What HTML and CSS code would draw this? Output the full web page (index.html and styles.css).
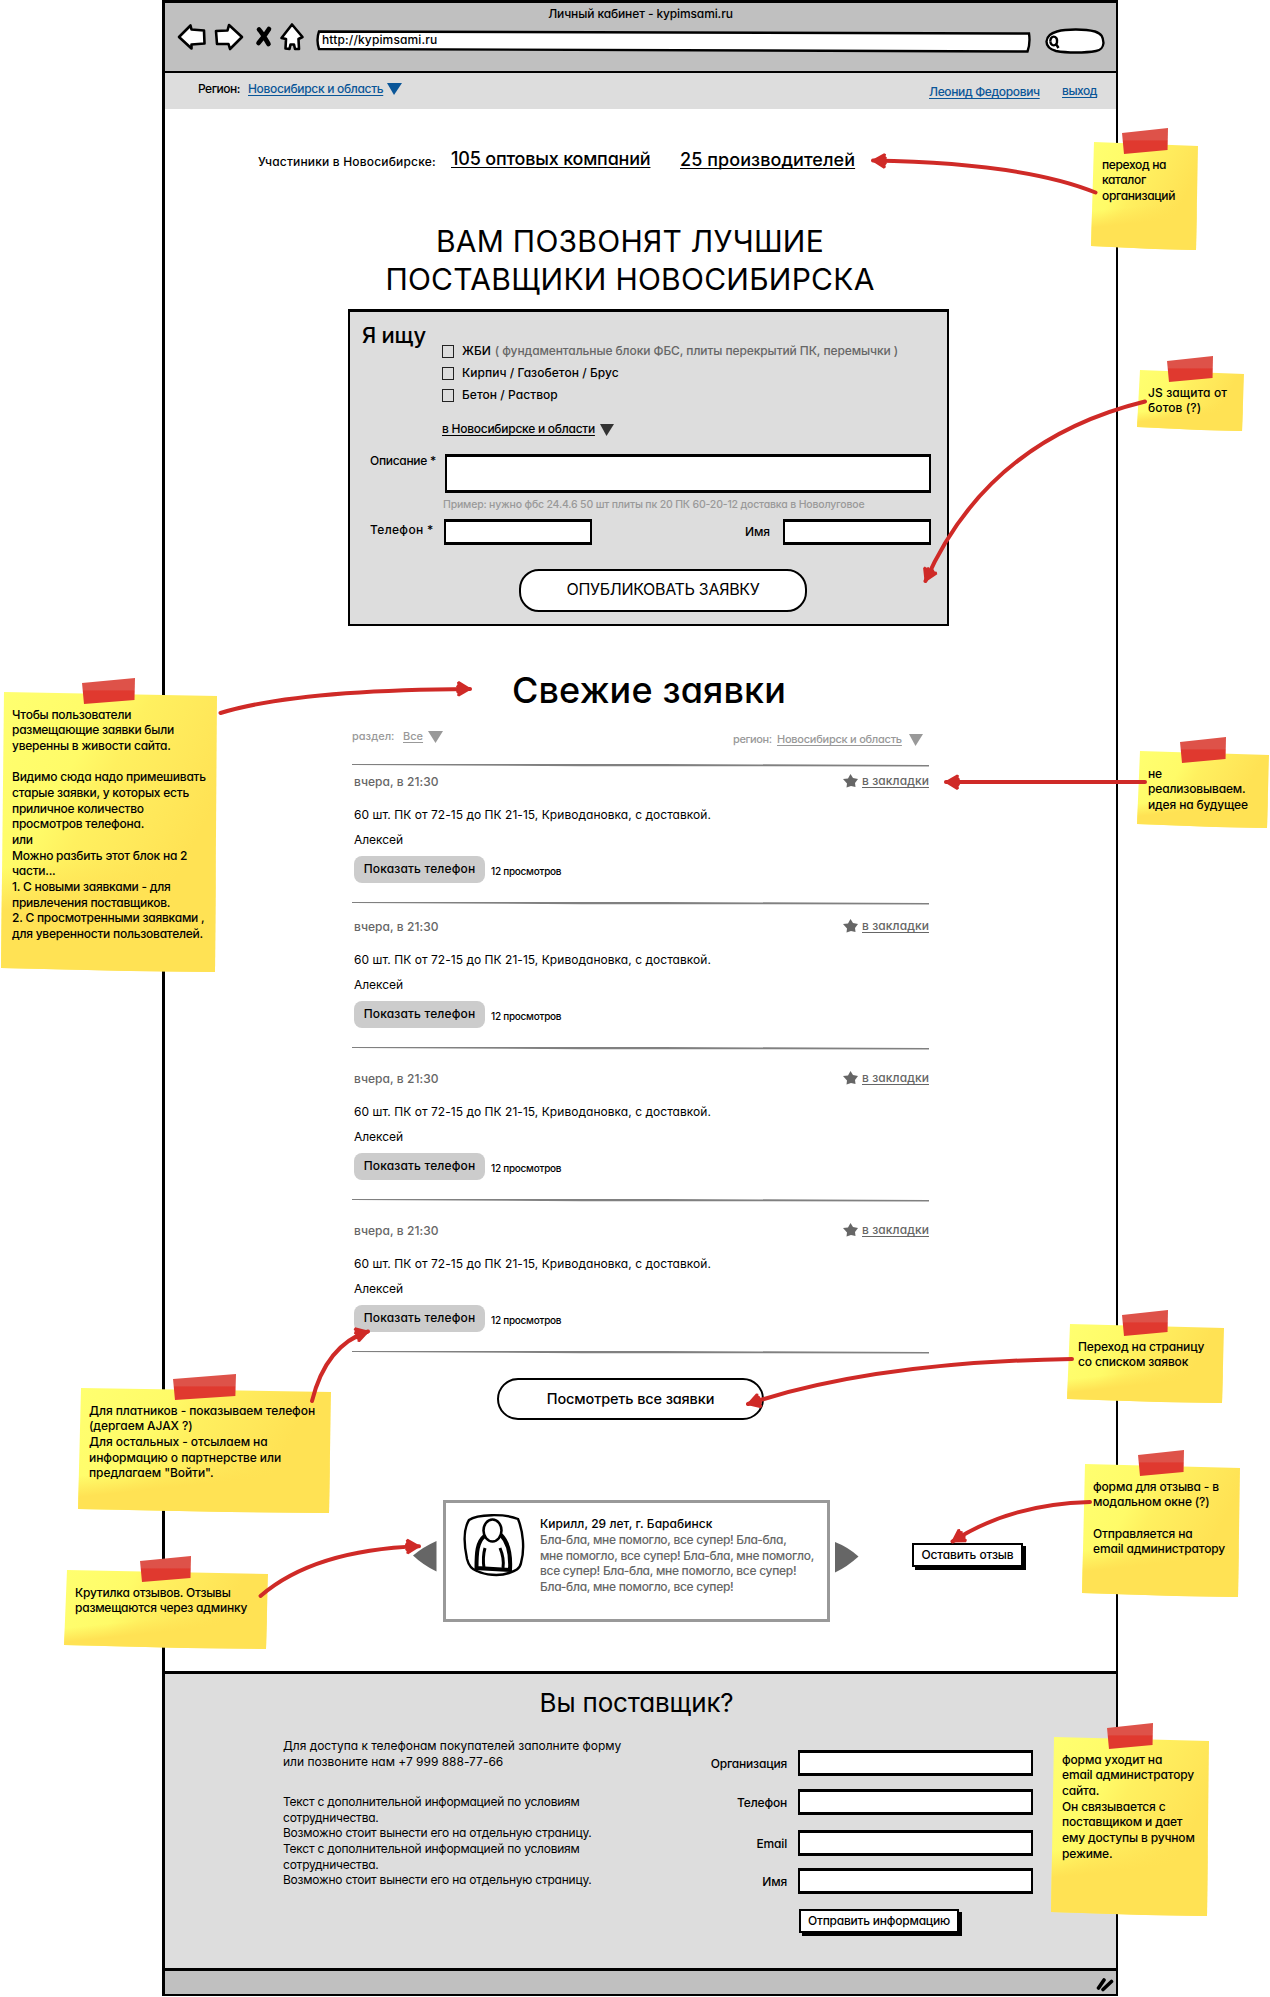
FILE: index.html
```html
<!DOCTYPE html>
<html lang="ru">
<head>
<meta charset="utf-8">
<title>Личный кабинет - kypimsami.ru</title>
<link rel="stylesheet" href="styles.css">
</head>
<body>
<div class="window">
  <header class="toolbar">
    <div class="window-title">Личный кабинет - kypimsami.ru</div>
    <div class="nav">
      <svg class="nav-icons" width="130" height="32" viewBox="0 0 130 32">
        <g fill="#fff" stroke="#000" stroke-width="2.6" stroke-linejoin="round">
          <path d="M2 15 13.500 3.500 14.500 7.500 27 8.500 27.500 21.500 14.500 22.500 14.500 26.500Z"/>
          <path d="M39 9 50.500 8.500 52 3 65 15 53 27 51.500 22 40 22Z"/>
          <path d="M115 2.500 125.500 15 121.500 17 122 27 118 27 117 22.500 113.500 22.500 112.500 27 108.500 26.500 109 17 104.500 16Z"/>
        </g>
        <path d="M82 7.500C86 12 89 18 91.500 22M92 7C89 12 85 17 81.500 21" fill="none" stroke="#000" stroke-width="4.600" stroke-linecap="round"/>
      </svg>
      <div class="url">
        <svg width="715" height="24" viewBox="0 0 715 24"><path d="M3 1.500 713 3.500Q714.500 13 711.500 21.500L3 19Q0 10 3 1.500Z" fill="#fff" stroke="#000" stroke-width="2.400"/></svg>
        <span>http://kypimsami.ru</span>
      </div>
      <svg class="search" width="60" height="26" viewBox="0 0 60 26">
        <path d="M12 3.500C22 .8 40 1 50 3.500 57 6 58 9 58.500 15 58 20 56 22 51 23 40 25 22 25 11 23 4 21 1.500 17 1.500 13.500 2 8 6 5 12 3.500Z" fill="#fff" stroke="#000" stroke-width="2.400"/>
        <path d="M11 16 13.500 20M5.500 13A3.300 3.700 0 1 0 12 13 3.300 3.700 0 1 0 5.500 13" fill="none" stroke="#000" stroke-width="2.400"/>
      </svg>
    </div>
  </header>

  <div class="account-bar">
    <span class="region-label">Регион:</span>
    <a class="region-link">Новосибирск и область</a>
    <svg class="tri" width="15" height="12" viewBox="0 0 15 12"><path d="M0 0H15L7 12Z" fill="#0a5698"/></svg>
    <a class="user-link">Леонид Федорович</a>
    <a class="exit-link">выход</a>
  </div>

  <main>
    <div class="stats">
      <span class="stats-label">Участиники в Новосибирске:</span>
      <a class="stats-a">105 оптовых компаний</a>
      <a class="stats-b">25 производителей</a>
    </div>
    <h1>ВАМ ПОЗВОНЯТ ЛУЧШИЕ<br>ПОСТАВЩИКИ НОВОСИБИРСКА</h1>

    <form class="order">
      <div class="order-top">
        <div class="order-title">Я ищу</div>
        <div class="choices">
          <label><i class="box"></i><span>ЖБИ</span><em>( фундаментальные блоки ФБС, плиты перекрытий ПК, перемычки )</em></label>
          <label><i class="box"></i><span class="c2">Кирпич / Газобетон / Брус</span></label>
          <label><i class="box"></i><span class="c2">Бетон / Раствор</span></label>
          <div class="where"><a>в Новосибирске и области</a><svg width="14" height="12" viewBox="0 0 14 12"><path d="M0 0H14L6.500 12Z" fill="#333"/></svg></div>
        </div>
      </div>
      <div class="order-desc"><span class="l-desc">Описание *</span><div class="field f-desc"></div></div>
      <div class="hint">Пример: нужно фбс 24.4.6 50 шт плиты пк 20 ПК 60-20-12 доставка в Новолуговое</div>
      <div class="order-contact">
        <span class="l-phone">Телефон *</span><div class="field f-phone"></div>
        <span class="l-name">Имя</span><div class="field f-name"></div>
      </div>
      <div class="pill publish">ОПУБЛИКОВАТЬ ЗАЯВКУ</div>
    </form>

    <h2>Свежие заявки</h2>
    <div class="filters">
      <span class="f-l">раздел:</span><a class="f-all">Все</a><svg class="f-t1" width="15" height="12" viewBox="0 0 15 12"><path d="M0 0H15L7.500 12Z" fill="#999"/></svg>
      <span class="f-r">регион:</span><a class="f-reg">Новосибирск и область</a><svg class="f-t2" width="14" height="12" viewBox="0 0 14 12"><path d="M0 0H14L6.500 12Z" fill="#999"/></svg>
    </div>

    <div class="list">
      <article class="item first">
        <svg class="rule" width="577" height="3" viewBox="0 0 577 3"><path d="M0 0 310 0 577 1V2.500L230 2.200 0 1Z" fill="#808080"/></svg>
        <div class="item-head"><time>вчера, в 21:30</time><svg width="15" height="14" viewBox="0 0 15 14"><path d="M7.500 0 10 4 15 5 12 9 12.500 13 8 12 3.500 13.500 4 9.500 0 5 5 4.500Z" fill="#666"/></svg><a>в закладки</a></div>
        <p class="what">60 шт. ПК от 72-15 до ПК 21-15, Криводановка, с доставкой.</p>
        <p class="who">Алексей</p>
        <div class="item-foot"><span class="show">Показать телефон</span><span class="views">12 просмотров</span></div>
      </article>
      <article class="item second">
        <svg class="rule" width="577" height="3" viewBox="0 0 577 3"><path d="M0 0 310 0 577 1V2.500L230 2.200 0 1Z" fill="#808080"/></svg>
        <div class="item-head"><time>вчера, в 21:30</time><svg width="15" height="14" viewBox="0 0 15 14"><path d="M7.500 0 10 4 15 5 12 9 12.500 13 8 12 3.500 13.500 4 9.500 0 5 5 4.500Z" fill="#666"/></svg><a>в закладки</a></div>
        <p class="what">60 шт. ПК от 72-15 до ПК 21-15, Криводановка, с доставкой.</p>
        <p class="who">Алексей</p>
        <div class="item-foot"><span class="show">Показать телефон</span><span class="views">12 просмотров</span></div>
      </article>
      <article class="item">
        <svg class="rule" width="577" height="3" viewBox="0 0 577 3"><path d="M0 0 310 0 577 1V2.500L230 2.200 0 1Z" fill="#808080"/></svg>
        <div class="item-head"><time>вчера, в 21:30</time><svg width="15" height="14" viewBox="0 0 15 14"><path d="M7.500 0 10 4 15 5 12 9 12.500 13 8 12 3.500 13.500 4 9.500 0 5 5 4.500Z" fill="#666"/></svg><a>в закладки</a></div>
        <p class="what">60 шт. ПК от 72-15 до ПК 21-15, Криводановка, с доставкой.</p>
        <p class="who">Алексей</p>
        <div class="item-foot"><span class="show">Показать телефон</span><span class="views">12 просмотров</span></div>
      </article>
      <article class="item">
        <svg class="rule" width="577" height="3" viewBox="0 0 577 3"><path d="M0 0 310 0 577 1V2.500L230 2.200 0 1Z" fill="#808080"/></svg>
        <div class="item-head"><time>вчера, в 21:30</time><svg width="15" height="14" viewBox="0 0 15 14"><path d="M7.500 0 10 4 15 5 12 9 12.500 13 8 12 3.500 13.500 4 9.500 0 5 5 4.500Z" fill="#666"/></svg><a>в закладки</a></div>
        <p class="what">60 шт. ПК от 72-15 до ПК 21-15, Криводановка, с доставкой.</p>
        <p class="who">Алексей</p>
        <div class="item-foot"><span class="show">Показать телефон</span><span class="views">12 просмотров</span></div>
      </article>
      <svg class="rule" width="577" height="3" viewBox="0 0 577 3"><path d="M0 0 310 0 577 1V2.500L230 2.200 0 1Z" fill="#808080"/></svg>
    </div>
    <div class="pill all">Посмотреть все заявки</div>

    <section class="reviews">
      <svg class="prev" width="24" height="31" viewBox="0 0 24 31"><path d="M23.500 0V30.500Q10 24 0 14.500 10 6 23.500 0Z" fill="#666"/></svg>
      <div class="review">
        <svg width="62" height="65" viewBox="0 0 62 65" fill="none" stroke="#000">
          <path d="M6 7C14 1 42 .5 55 6 60 18 62 36 58 50 57 56 52 58 46 60 36 63.500 22 62 14 58 7 56 5 50 4 46 1 32 .5 16 6 7Z" stroke-width="2.400"/>
          <ellipse cx="29.500" cy="17.500" rx="9" ry="11" stroke-width="2.600"/>
          <path d="M21.500 23C14 29 13.500 40 13.500 55L47 57C48 40 45 29 38 22" stroke-width="4"/>
          <path d="M22 35C20 42 20 48 21 55M37 35C40 42 41 48 40 55" stroke-width="3"/>
        </svg>
        <div class="review-text"><b>Кирилл, 29 лет, г. Барабинск</b><br>Бла-бла, мне помогло, все супер! Бла-бла,<br>мне помогло, все супер! Бла-бла, мне помогло,<br>все супер! Бла-бла, мне помогло, все супер!<br>Бла-бла, мне помогло, все супер!</div>
      </div>
      <svg class="next" width="24" height="31" viewBox="0 0 24 31"><path d="M0 0Q13 5 23.500 14.500 12 25 0 30.500Z" fill="#666"/></svg>
      <div class="btn leave">Оставить отзыв</div>
    </section>
  </main>

  <footer>
    <h3>Вы поставщик?</h3>
    <div class="footer-cols">
      <div class="info">
        <p class="p1">Для доступа к телефонам покупателей заполните форму<br>или позвоните нам +7 999 888-77-66</p>
        <p>Текст с дополнительной информацией по условиям<br>сотрудничества.<br>Возможно стоит вынести его на отдельную страницу.<br>Текст с дополнительной информацией по условиям<br>сотрудничества.<br>Возможно стоит вынести его на отдельную страницу.</p>
      </div>
      <form class="supplier">
        <span>Организация</span><div class="field"></div>
        <span>Телефон</span><div class="field"></div>
        <span>Email</span><div class="field"></div>
        <span>Имя</span><div class="field"></div>
        <div class="btn send">Отправить информацию</div>
      </form>
    </div>
  </footer>
  <div class="status"><svg width="18" height="15" viewBox="0 0 18 15"><path d="M2.500 11 8 3M7 12.500 15.500 4.500" stroke="#000" stroke-width="3.600" stroke-linecap="round"/></svg></div>
</div>

<aside class="note n1">переход на<br>каталог<br>организаций</aside>
<aside class="note n2">JS защита от<br>ботов (?)</aside>
<aside class="note n3">не<br>реализовываем.<br>идея на будущее</aside>
<aside class="note n4">Чтобы пользователи<br>размещающие заявки были<br>уверенны в живости сайта.<br><br>Видимо сюда надо примешивать<br>старые заявки, у которых есть<br>приличное количество<br>просмотров телефона.<br>или<br>Можно разбить этот блок на 2<br>части...<br>1. С новыми заявками - для<br>привлечения поставщиков.<br>2. С просмотренными заявками ,<br>для уверенности пользователей.</aside>
<aside class="note n5">Для платников - показываем телефон<br>(дергаем AJAX ?)<br>Для остальных - отсылаем на<br>информацию о партнерстве или<br>предлагаем "Войти".</aside>
<aside class="note n6">Крутилка отзывов. Отзывы<br>размещаются через админку</aside>
<aside class="note n7">Переход на страницу<br>со списком заявок</aside>
<aside class="note n8">форма для отзыва - в<br>модальном окне (?)<br><br>Отправляется на<br>email администратору</aside>
<aside class="note n9">форма уходит на<br>email администратору<br>сайта.<br>Он связывается с<br>поставщиком и дает<br>ему доступы в ручном<br>режиме.</aside>

<svg class="arrows" width="1270" height="1997" viewBox="0 0 1270 1997">
  <defs>
    <marker id="head" markerUnits="userSpaceOnUse" markerWidth="18" markerHeight="20" refX="14" refY="9" orient="auto">
      <path d="M16 9 3 16.500 1 15.500 1.500 13.500 0 12 1.500 9 0 6.500 1.500 4.500 1 2.500 3 1Z" fill="#cf2a27"/>
    </marker>
  </defs>
  <g fill="none" stroke="#cf2a27" stroke-width="4" stroke-linecap="round" marker-end="url(#head)">
    <path d="M1095.500 192.500Q1023 163 873 160.500"/>
    <path d="M1145 401.500Q988 440 925.500 581"/>
    <path d="M1145 782H946"/>
    <path d="M220.500 713Q295 690 470 689"/>
    <path d="M312 1401Q326 1345 368 1331.500"/>
    <path d="M260.500 1596Q314 1550 419 1546.300"/>
    <path d="M1072 1359Q875 1362 748 1404"/>
    <path d="M1090 1502Q1010 1504 952.500 1541.500"/>
  </g>
</svg>
</body>
</html>
```
FILE: styles.css
```css
* { box-sizing: border-box; }
body {
  margin: 0;
  position: relative;
  width: 1270px;
  height: 1997px;
  overflow: hidden;
  background: #fff;
  color: #000;
  font: 450 12px/16px Inter, "Open Sans", sans-serif;
  font-feature-settings: "cv11";
  white-space: nowrap;
}
svg { display: block; flex: none; }
h1, h2, h3, p { margin: 0; font-weight: 400; }
a { text-decoration: underline; text-decoration-thickness: 1px; text-underline-offset: 2px; text-decoration-skip-ink: none; }
span, a, time { flex: none; }

.window {
  display: flex;
  flex-direction: column;
  margin: 0 0 0 162px;
  width: 956px;
  height: 1996px;
  border: 3px solid #000;
  border-right-width: 2px;
  border-bottom-width: 2px;
}

/* browser chrome */
.toolbar { height: 70px; background: #c0c0c0; border-bottom: 2px solid #000; padding-top: 3px; }
.window-title { text-align: center; letter-spacing: -.12px; }
.nav { display: flex; padding-left: 12px; }
.nav-icons { margin-right: 9px; }
.url { display: grid; margin-top: 8px; width: 715px; height: 24px; }
.url > * { grid-area: 1 / 1; }
.url span { padding: 2px 0 0 6px; letter-spacing: .14px; }
.search { margin: 6px 0 0 14px; }

.account-bar { display: flex; align-items: flex-start; height: 36px; background: #ddd; padding: 8px 0 0 33px; }
.account-bar a { color: #0a5698; }
.region-label { width: 50px; letter-spacing: -.5px; }
.region-link { width: 139px; letter-spacing: -.32px; }
.tri { margin-top: 2px; }
.user-link { margin: 3px 0 0 527px; width: 133px; letter-spacing: -.35px; }
.exit-link { margin-top: 2px; letter-spacing: -.45px; }

.stats { display: flex; align-items: flex-start; height: 113px; padding: 37px 0 0 93px; }
.stats-label { width: 193px; margin-top: 8px; letter-spacing: .18px; }
.stats a { font-size: 18px; line-height: 24px; }
.stats-a { width: 229px; margin-top: 1px; letter-spacing: -.2px; }
.stats-b { margin-top: 2px; letter-spacing: .07px; }
h1 { padding-right: 21px; text-align: center; font-size: 30px; line-height: 38px; letter-spacing: .25px; }

/* order form */
.order { margin: 11px 0 0 183px; width: 601px; height: 317px; background: #ddd; border: 2px solid #000; border-top-width: 3px; }
.field { flex: none; background: #fff; border: 3px solid #000; border-width: 3px 2px; }
.order-top { display: flex; height: 142px; }
.order-title { width: 92px; padding: 9px 0 0 12px; font-size: 22px; line-height: 28px; letter-spacing: -.3px; }
.choices { padding-top: 31px; }
.choices label { display: flex; height: 22px; }
.choices em { font-style: normal; color: #666; margin-left: 4px; letter-spacing: -.09px; }
.choices .c2 { letter-spacing: .05px; }
.box { width: 12px; height: 13px; margin: 2px 8px 0 0; border: 1px solid #222; }
.where { display: flex; margin-top: 12px; letter-spacing: -.26px; }
.where svg { margin: 3px 0 0 5px; }
.order-desc { display: flex; height: 43px; }
.l-desc { width: 95px; padding-left: 20px; margin-top: -1px; letter-spacing: -.3px; }
.f-desc { width: 486px; height: 39px; }
.hint { padding: 1px 0 0 93px; height: 22px; font-size: 10.5px; line-height: 14px; letter-spacing: -.18px; color: #999; }
.order-contact { display: flex; height: 50px; }
.l-phone { width: 94px; padding: 3px 0 0 20px; letter-spacing: .34px; }
.f-phone { width: 148px; height: 26px; }
.l-name { width: 191px; padding: 5px 0 0 153px; letter-spacing: -.1px; }
.f-name { width: 148px; height: 26px; }
.pill { background: #fff; border: 2px solid #000; text-align: center; }
.publish { margin-left: 169px; width: 288px; height: 43px; border-radius: 20px; font-weight: 400; font-size: 16px; line-height: 37px; letter-spacing: -.31px; }

/* fresh orders */
h2 { margin-top: 42px; padding-left: 17px; text-align: center; font-weight: 450; font-size: 36px; line-height: 44px; letter-spacing: .15px; }
.filters { display: flex; align-items: flex-start; height: 36px; margin: 16px 0 0 187px; color: #999; font-size: 11px; }
.f-l { width: 51px; }
.f-all { width: 25px; }
.f-t1 { margin-top: 3px; }
.f-r { margin: 3px 0 0 290px; width: 44px; letter-spacing: -.4px; }
.f-reg { margin-top: 3px; width: 132px; letter-spacing: -.25px; }
.f-t2 { margin-top: 6px; }
.list { width: 577px; margin-left: 187px; }
.item { height: 152px; }
.item.first { height: 138px; }
.item.second { height: 145px; }
.item-head { display: flex; height: 16px; margin: 21px 0 0 2px; color: #666; }
.first .item-head { margin-top: 7px; }
.second .item-head { margin-top: 14px; }
.item-head time { width: 489px; letter-spacing: .06px; }
.item-head a { margin: -1px 0 0 4px; letter-spacing: .08px; }
.item-head svg { margin-top: 0; }
.what { margin: 17px 0 0 2px; letter-spacing: .04px; }
.who { margin: 9px 0 0 2px; letter-spacing: -.05px; }
.item-foot { display: flex; margin: 8px 0 0 2px; }
.show { width: 131px; height: 27px; padding-top: 5px; background: #ccc; border-radius: 8px; text-align: center; letter-spacing: .16px; }
.views { margin: 7px 0 0 6px; font-size: 10px; letter-spacing: -.26px; }
.all { margin: 24px 0 0 332px; width: 267px; height: 42px; border-radius: 21px; font-size: 14.5px; line-height: 37px; letter-spacing: -.14px; }

/* reviews */
.reviews { display: flex; margin: 80px 0 0 248px; height: 171px; }
.prev { margin: 41px 6px 0 0; }
.review { display: flex; width: 387px; height: 122px; border: 3px solid #999; padding: 10px 0 0 17px; }
.review-text { margin: 3px 0 0 15px; line-height: 15.75px; color: #666; letter-spacing: -.29px; }
.review-text b { font-weight: inherit; color: #000; letter-spacing: .04px; }
.next { margin: 42px 53px 0 5px; }
.btn { background: #fff; border: 2px solid #000; box-shadow: 3px 3px 0 #000; height: 24px; line-height: 20px; text-align: center; }
.leave { margin-top: 43px; width: 111px; letter-spacing: -.12px; }

/* supplier block */
footer { height: 300px; background: #ddd; border: solid #000; border-width: 3px 0 3px; }
h3 { margin-top: 13px; padding-right: 8px; text-align: center; font-size: 26px; line-height: 32px; letter-spacing: -.16px; }
.footer-cols { display: flex; padding: 19px 0 0 118px; }
.info { width: 389px; line-height: 15.67px; letter-spacing: -.23px; }
.info .p1 { letter-spacing: -.02px; margin-bottom: 24.600px; }
.supplier { display: grid; grid-template-columns: 115px 235px; grid-template-rows: 39px 41px 38px 41px 30px; column-gap: 11px; margin-top: 12px; }
.supplier span { text-align: right; padding-top: 6px; letter-spacing: -.18px; }
.supplier .field { height: 26px; }
.send { grid-column: 2; width: 160px; margin-left: 1px; height: 24px; letter-spacing: -.23px; }
.status { flex: 1; background: #c0c0c0; display: flex; justify-content: flex-end; padding: 6px 2px 0 0; }

/* sticky notes laid over the page */
.note { position: absolute; z-index: 1; padding: 14.500px 0 0 11px; line-height: 15.67px; letter-spacing: -.15px; }
.note::before {
  content: ""; position: absolute; z-index: -1; inset: 0;
  background:
    linear-gradient(174deg, transparent 58%, #ffe254 72%),
    linear-gradient(118deg, #ffff70 0, #fffb68 30%, #fff05f 42%, #ffe85a 60%, #ffe254 75%);
  clip-path: polygon(3px 0, 100% 4px, calc(100% - 2px) 100%, 60% calc(100% - 1px), 0 calc(100% - 4px));
}
.note::after {
  content: ""; position: absolute; top: -14px; left: var(--tape); width: var(--tw, 46px); height: 26px;
  background: linear-gradient(#de5249 0 45%, #e0392f 50%);
  clip-path: polygon(0 5px, 100% 0, 99% 22px, 2px 100%);
}
.n1 { left: 1091px; top: 142px; width: 107px; height: 108px; --tape: 31px; letter-spacing: -.35px; }
.n2 { left: 1137px; top: 370px; width: 107px; height: 61px; --tape: 30px; letter-spacing: .1px; }
.n3 { left: 1137px; top: 751px; width: 132px; height: 77px; --tape: 43px; }
.n4 { left: 1px; top: 692px; width: 216px; height: 280px; --tape: 81px; --tw: 53px; letter-spacing: -.24px; }
.n5 { left: 78px; top: 1388px; width: 253px; height: 125px; --tape: 95px; --tw: 63px; letter-spacing: -.07px; }
.n6 { left: 64px; top: 1570px; width: 204px; height: 79px; --tape: 76px; --tw: 51px; letter-spacing: -.23px; }
.n7 { left: 1067px; top: 1324px; width: 157px; height: 79px; --tape: 55px; }
.n8 { left: 1082px; top: 1464px; width: 158px; height: 133px; --tape: 56px; }
.n9 { left: 1051px; top: 1737px; width: 158px; height: 179px; --tape: 56px; }
.arrows { position: absolute; left: 0; top: 0; z-index: 2; pointer-events: none; }
```
